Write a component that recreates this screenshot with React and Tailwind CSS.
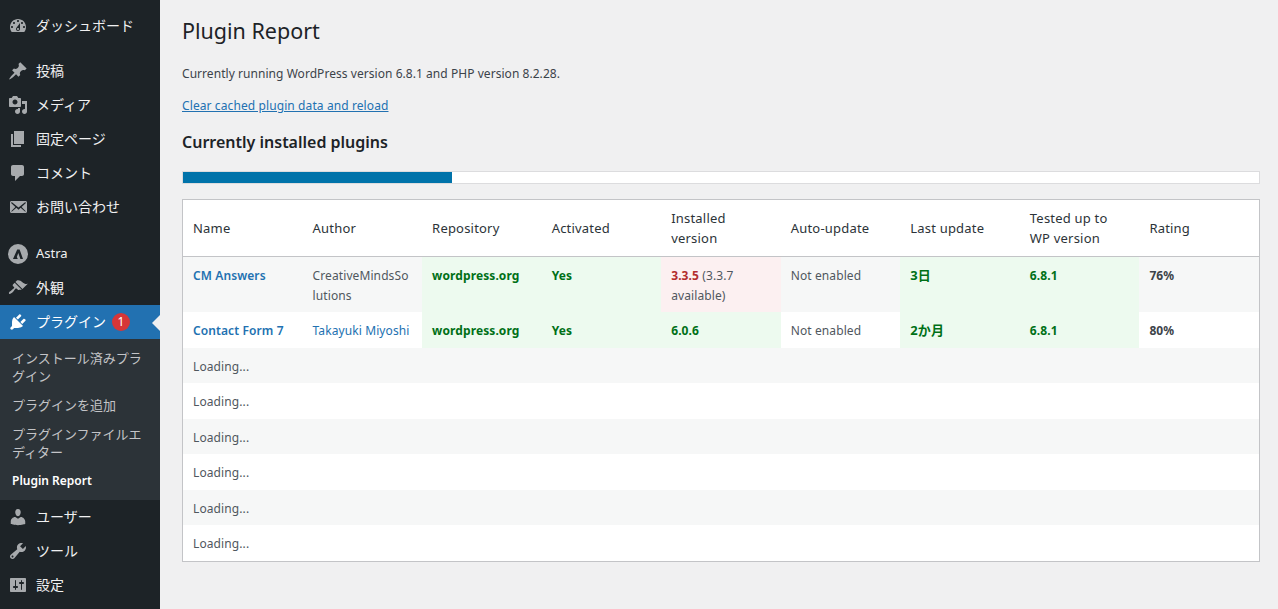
const font = { fontFamily: '"Noto Sans", "Noto Sans CJK JP", sans-serif' };

const paths = {
  dashboard: "M3.76 16h12.48c1.1-1.37 1.76-3.11 1.76-5 0-4.42-3.58-8-8-8s-8 3.58-8 8c0 1.89.66 3.63 1.76 5zM10 4c.55 0 1 .45 1 1s-.45 1-1 1-1-.45-1-1 .45-1 1-1zM6 6c.55 0 1 .45 1 1s-.45 1-1 1-1-.45-1-1 .45-1 1-1zm8 0c.55 0 1 .45 1 1s-.45 1-1 1-1-.45-1-1 .45-1 1-1zm-5.37 5.55L12 7v6c0 1.1-.9 2-2 2s-2-.9-2-2c0-.57.24-1.08.63-1.45zM4 10c.55 0 1 .45 1 1s-.45 1-1 1-1-.45-1-1 .45-1 1-1zm12 0c.55 0 1 .45 1 1s-.45 1-1 1-1-.45-1-1 .45-1 1-1zm-5 3c0-.55-.45-1-1-1s-1 .45-1 1 .45 1 1 1 1-.45 1-1z",
  post: "M10.44 3.02l1.82-1.82 6.36 6.35-1.83 1.82c-1.05-.68-2.48-.57-3.41.36l-.75.75c-.92.93-1.04 2.35-.35 3.41l-1.83 1.82-2.41-2.41-2.8 2.79c-.42.42-3.38 2.71-3.8 2.29s1.86-3.39 2.28-3.81l2.79-2.79L4.1 9.36l1.83-1.82c1.05.69 2.48.57 3.4-.36l.75-.75c.93-.92 1.05-2.35.36-3.41z",
  media: "M13 11V4c0-.55-.45-1-1-1h-1.67L9 1H5L3.67 3H2c-.55 0-1 .45-1 1v7c0 .55.45 1 1 1h10c.55 0 1-.45 1-1zM7 4.5c1.38 0 2.5 1.12 2.5 2.5S8.38 9.5 7 9.5 4.5 8.38 4.5 7 5.62 4.5 7 4.5zM14 6h5v10.5c0 1.38-1.12 2.5-2.5 2.5S14 17.88 14 16.5s1.12-2.5 2.5-2.5c.17 0 .34.02.5.05V9h-3V6zm-4 8.05V13h2v3.5c0 1.38-1.12 2.5-2.5 2.5S7 17.88 7 16.5 8.12 14 9.5 14c.17 0 .34.02.5.05z",
  page: "M6 15V2h10v13H6zm-1 1h8v2H3V5h2v11z",
  comments: "M5 2h9c1.1 0 2 .9 2 2v7c0 1.1-.9 2-2 2h-2l-5 5v-5H5c-1.1 0-2-.9-2-2V4c0-1.1.9-2 2-2z",
  email: "M19 14.5v-9c0-.83-.67-1.5-1.5-1.5H3.49c-.83 0-1.5.67-1.5 1.5v9c0 .83.67 1.5 1.5 1.5H17.5c.83 0 1.5-.67 1.5-1.5zm-1.31-9.11c.33.33.15.67-.03.84L13.6 9.95l3.9 4.06c.12.14.2.36.06.51-.13.16-.43.15-.56.05l-4.37-3.73-2.14 1.95-2.13-1.95-4.37 3.73c-.13.1-.43.11-.56-.05-.14-.15-.06-.37.06-.51l3.9-4.06-4.06-3.72c-.18-.17-.36-.51-.03-.84s.67-.17.95.07l6.24 5.04 6.25-5.04c.28-.24.62-.4.95-.07z",
  appearance: "M14.48 11.06L7.41 3.99l1.5-1.5c.5-.56 2.3-.47 3.51.32 1.21.8 1.43 1.28 2.91 2.1 1.18.64 2.45 1.26 4.45.85zm-.71.71L6.7 4.7 4.93 6.47c-.39.39-.39 1.02 0 1.41l1.06 1.06c.39.39.39 1.03 0 1.42-.6.6-1.43 1.11-2.21 1.69-.35.26-.7.53-1.01.84C1.43 13.23.4 14.98 1.1 15.67c.7.7 2.45-.33 3.79-1.67.31-.31.58-.66.85-1.02.57-.78 1.08-1.61 1.69-2.21.39-.39 1.02-.39 1.41 0l1.06 1.06c.39.39 1.02.39 1.41 0z",
  plugins: "M13.11 4.36L9.87 7.6 8 5.73l3.24-3.24c.35-.34 1.05-.2 1.56.32.52.51.66 1.21.31 1.55zm-8 1.77l.91-1.12 9.01 9.01-1.19.84c-.71.71-2.63 1.16-3.82 1.16H6.14L4.9 17.26c-.59.59-1.54.59-2.12 0-.59-.58-.59-1.53 0-2.12l1.24-1.24v-3.88c0-1.13.4-3.19 1.09-3.89zm7.26 3.97l3.24-3.24c.34-.35 1.04-.21 1.55.31.52.51.66 1.21.31 1.55l-3.24 3.25z",
  users: "M10 9.25c-2.27 0-2.73-3.44-2.73-3.44C7 4.02 7.82 2 9.97 2c2.16 0 2.98 2.02 2.71 3.81 0 0-.41 3.44-2.68 3.44zm0 2.57L12.72 10c2.39 0 4.52 2.33 4.52 4.53v2.49s-3.65 1.13-7.24 1.13c-3.65 0-7.24-1.13-7.24-1.13v-2.49c0-2.25 1.94-4.48 4.47-4.48z",
  tools: "M16.68 9.77c-1.34 1.34-3.3 1.67-4.95.99l-5.41 6.52c-.99.99-2.59.99-3.58 0s-.99-2.59 0-3.57l6.52-5.42c-.68-1.65-.35-3.61.99-4.95 1.28-1.28 3.12-1.62 4.72-1.06l-2.89 2.89 2.82 2.82 2.86-2.87c.53 1.58.18 3.39-1.08 4.65zM3.81 16.21c.4.39 1.04.39 1.43 0 .4-.4.4-1.04 0-1.43-.39-.4-1.03-.4-1.43 0-.39.39-.39 1.03 0 1.43z",
  settings: "M18 16V4c0-.55-.45-1-1-1H3c-.55 0-1 .45-1 1v12c0 .55.45 1 1 1h14c.55 0 1-.45 1-1zM8 11h1c.55 0 1 .45 1 1s-.45 1-1 1H8v1.5c0 .28-.22.5-.5.5s-.5-.22-.5-.5V13H6c-.55 0-1-.45-1-1s.45-1 1-1h1V5.5c0-.28.22-.5.5-.5s.5.22.5.5V11zm5-2h-1c-.55 0-1-.45-1-1s.45-1 1-1h1V5.5c0-.28.22-.5.5-.5s.5.22.5.5V7h1c.55 0 1 .45 1 1s-.45 1-1 1h-1v5.5c0 .28-.22.5-.5.5s-.5-.22-.5-.5V9z",
  astra: "M10 0a10 10 0 1 0 0 20 10 10 0 0 0 0-20zM9.2 5.5h2.4L15 15h-2.6L10.3 9 8.8 13l1 2H5z",
};

function Icon({ name, className = "text-[#a7aaad]" }) {
  return (
    <svg viewBox="0 0 20 20" className={`size-5 shrink-0 fill-current ${className}`}>
      <path d={paths[name]} fillRule={name === "astra" ? "evenodd" : undefined} />
    </svg>
  );
}

function MenuItem({ icon, label, small }) {
  return (
    <div className={`flex h-8.5 items-center gap-2 pl-2 text-[#f0f0f1] ${small ? "text-[13px]" : "text-sm"}`}>
      <Icon name={icon} />
      <span>{label}</span>
    </div>
  );
}

function Sidebar() {
  return (
    <aside className="flex w-40 shrink-0 flex-col bg-[#1d2327] pt-2.25">
      <MenuItem icon="dashboard" label="ダッシュボード" />
      <div className="h-2.75" />
      <MenuItem icon="post" label="投稿" />
      <MenuItem icon="media" label="メディア" />
      <MenuItem icon="page" label="固定ページ" />
      <MenuItem icon="comments" label="コメント" />
      <MenuItem icon="email" label="お問い合わせ" />
      <div className="h-3.25" />
      <MenuItem icon="astra" label="Astra" small />
      <MenuItem icon="appearance" label="外観" />
      <div className="relative flex h-8.5 items-center gap-2 bg-[#2271b1] pl-2 text-sm text-white">
        <Icon name="plugins" className="text-white" />
        <span>プラグイン</span>
        <span className="-ml-0.5 flex size-4.5 items-center justify-center rounded-full bg-[#d63638] text-xs text-white">1</span>
        <span className="absolute right-0 top-2.5 size-0 border-y-8 border-r-8 border-y-transparent border-r-[#f0f0f1]" />
      </div>
      <div className="flex flex-col gap-2.75 bg-[#2c3338] px-3 py-2.5 text-[13px] leading-4.5 text-[#c3c4c7]">
        <div>インストール済みプラグイン</div>
        <div>プラグインを追加</div>
        <div>プラグインファイルエディター</div>
        <div className="text-xs leading-4.5 font-semibold text-white">Plugin Report</div>
      </div>
      <MenuItem icon="users" label="ユーザー" />
      <MenuItem icon="tools" label="ツール" />
      <MenuItem icon="settings" label="設定" />
    </aside>
  );
}

const good = "bg-[#edfaef] font-bold text-[#007017]";
const cell = "px-2.5 pt-2.25 pb-1.75 align-top";
const strong = "font-bold text-[#3c434a]";
const headers = ["Name", "Author", "Repository", "Activated", "Installed version", "Auto-update", "Last update", "Tested up to WP version", "Rating"];
const link = "font-semibold text-[#2271b1]";

function Table() {
  return (
    <table className="w-full table-fixed border-separate border-spacing-0 border border-[#c3c4c7] bg-white text-xs leading-[19.5px] tracking-[0.1px] text-[#50575e]">
      <thead>
        <tr>
          {headers.map((h) => (
            <th key={h} className="border-b border-[#c3c4c7] px-2.5 py-2 text-left text-[13px] leading-5 font-normal tracking-[0.2px] text-[#2c3338]">{h}</th>
          ))}
        </tr>
      </thead>
      <tbody>
        <tr className="bg-[#f6f7f7]">
          <td className={`${cell} ${link}`}>CM Answers</td>
          <td className={cell}>CreativeMindsSo<wbr />lutions</td>
          <td className={`${cell} ${good}`}>wordpress.org</td>
          <td className={`${cell} ${good}`}>Yes</td>
          <td className={`${cell} bg-[#fcf0f1]`}><b className="text-[#b32d2e]">3.3.5</b> (3.3.7 available)</td>
          <td className={cell}>Not enabled</td>
          <td className={`${cell} ${good} text-[13px]`}>3日</td>
          <td className={`${cell} ${good}`}>6.8.1</td>
          <td className={`${cell} ${strong}`}>76%</td>
        </tr>
        <tr>
          <td className={`${cell} ${link}`}>Contact Form 7</td>
          <td className={`${cell} text-[#2271b1]`}>Takayuki Miyoshi</td>
          <td className={`${cell} ${good}`}>wordpress.org</td>
          <td className={`${cell} ${good}`}>Yes</td>
          <td className={`${cell} ${good}`}>6.0.6</td>
          <td className={cell}>Not enabled</td>
          <td className={`${cell} ${good} text-[13px]`}>2か月</td>
          <td className={`${cell} ${good}`}>6.8.1</td>
          <td className={`${cell} ${strong}`}>80%</td>
        </tr>
        {[0, 1, 2, 3, 4, 5].map((i) => (
          <tr key={i} className={i % 2 === 0 ? "bg-[#f6f7f7]" : ""}>
            <td colSpan={9} className={cell}>Loading...</td>
          </tr>
        ))}
      </tbody>
    </table>
  );
}

export default function App() {
  return (
    <div className="flex min-h-screen bg-[#f0f0f1]" style={font}>
      <Sidebar />
      <main className="flex-1 pl-5.5 pr-4.5 pt-3.75">
        <h1 className="text-[21.5px] leading-8 text-[#1d2327]">Plugin Report</h1>
        <p className="mt-4.25 text-xs leading-5 tracking-[0.05px] text-[#3c434a]">Currently running WordPress version 6.8.1 and PHP version 8.2.28.</p>
        <p className="mt-3 text-xs leading-5 tracking-[0.1px]"><a className="text-[#2271b1] underline">Clear cached plugin data and reload</a></p>
        <h2 className="mt-3.5 text-base font-semibold text-[#1d2327]">Currently installed plugins</h2>
        <div className="mt-4.25 h-3.25 border border-[#dcdcde] bg-white">
          <div className="h-full w-1/4 bg-[#0073aa]" />
        </div>
        <div className="mt-3.75"><Table /></div>
      </main>
    </div>
  );
}
